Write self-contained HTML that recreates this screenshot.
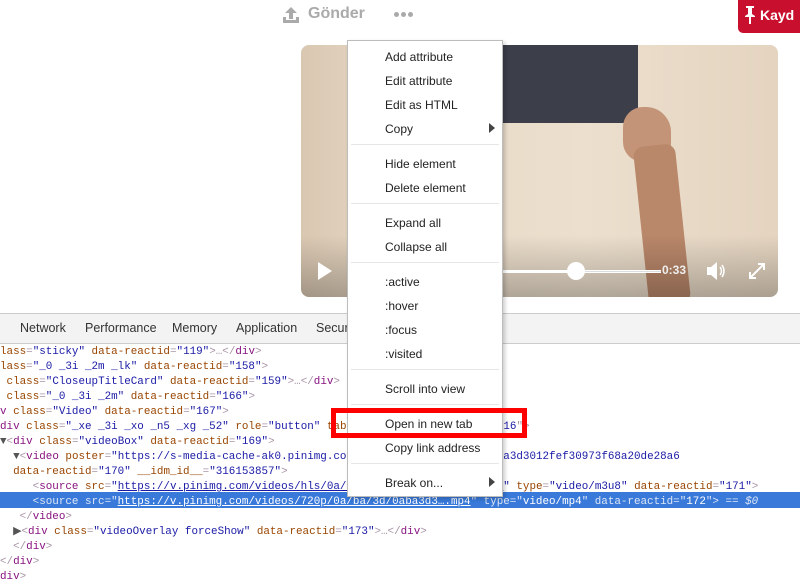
<!DOCTYPE html>
<html><head><meta charset="utf-8"><style>
*{margin:0;padding:0;box-sizing:border-box}
body{width:800px;height:576px;overflow:hidden;background:#fff;position:relative;font-family:"Liberation Sans",sans-serif}
.a{position:absolute}
.mi{position:absolute;left:37px;font-size:12px;color:#222;line-height:14px;white-space:nowrap}
.sep{position:absolute;left:3px;right:3px;height:1px;background:#e6e6e6}
.code{position:absolute;left:0;font-family:"Liberation Mono",monospace;font-size:10.9px;line-height:15px;white-space:pre;color:#a894a6}
.t{color:#881280}.n{color:#994500}.v{color:#1a1aa6}.u{color:#1a1aa6;text-decoration:underline}
.tab{position:absolute;top:321px;font-size:12.5px;color:#333}
</style></head><body>
<!-- top bar -->
<svg class="a" style="left:281px;top:5px" width="20" height="20" viewBox="0 0 20 20"><path d="M10 2 L4 8 H8 V14 H12 V8 H16 Z" fill="#aaa"/><path d="M2 12 V18 H18 V12 H15 V15 H5 V12 Z" fill="#aaa"/></svg>
<div class="a" style="left:308px;top:5px;font-size:16px;font-weight:bold;color:#aaa">Gönder</div>
<div class="a" style="left:394px;top:12px;width:5px;height:5px;border-radius:3px;background:#aaa"></div>
<div class="a" style="left:401px;top:12px;width:5px;height:5px;border-radius:3px;background:#aaa"></div>
<div class="a" style="left:408px;top:12px;width:5px;height:5px;border-radius:3px;background:#aaa"></div>
<div class="a" style="left:738px;top:0;width:70px;height:33px;background:#c8102e;border-radius:0 0 0 5px"></div>
<svg class="a" style="left:744px;top:5px" width="12" height="20" viewBox="0 0 12 20"><path d="M2 1H10V3H8V9L11 11V12H7V19H5V12H1V11L4 9V3H2Z" fill="#fff"/></svg>
<div class="a" style="left:760px;top:7px;font-size:14px;font-weight:bold;color:#fff">Kayd</div>
<!-- video -->
<div class="a" style="left:301px;top:45px;width:477px;height:252px;border-radius:8px;overflow:hidden;background:linear-gradient(90deg,#d9c7b1 0%,#e8d9c6 20%,#ecdfcd 60%,#e4d4c0 100%)">
 <div class="a" style="left:199px;top:0;width:138px;height:78px;background:#3c3e4a"></div>
 <div class="a" style="left:322px;top:62px;width:48px;height:55px;background:#c49478;border-radius:20px 25px 10px 20px"></div>
 <div class="a" style="left:340px;top:100px;width:42px;height:160px;background:#b9876a;transform:rotate(-6deg);border-radius:10px"></div>
 <div class="a" style="left:0;top:190px;width:477px;height:62px;background:linear-gradient(rgba(0,0,0,0),rgba(0,0,0,.25))"></div>
 <div class="a" style="left:190px;top:225px;width:170px;height:3px;background:#fff"></div>
 <div class="a" style="left:280px;top:226px;width:80px;height:1px;background:#ddd"></div>
 <div class="a" style="left:266px;top:217px;width:18px;height:18px;border-radius:9px;background:#fff"></div>
 <svg class="a" style="left:16px;top:217px" width="16" height="18"><path d="M1 0L15 9L1 18Z" fill="#fff"/></svg>
 <div class="a" style="left:361px;top:218px;font-size:12px;font-weight:bold;color:#eee">0:33</div>
 <svg class="a" style="left:405px;top:216px" width="22" height="20"><path d="M1 6H5L11 1V19L5 14H1Z" fill="#fff"/><path d="M14 6Q17 10 14 14M16 4Q20 10 16 16" stroke="#fff" fill="none" stroke-width="1.5"/></svg>
 <svg class="a" style="left:447px;top:217px" width="18" height="18"><path d="M2 16L16 2M10 2H16V8M2 10V16H8" stroke="#fff" fill="none" stroke-width="2"/></svg>
</div>
<!-- devtools -->
<div class="a" style="left:0;top:313px;width:800px;height:263px;background:#fff"></div>
<div class="a" style="left:0;top:313px;width:800px;height:1px;background:#ccc"></div>
<div class="a" style="left:0;top:314px;width:800px;height:30px;background:#f3f3f3;border-bottom:1px solid #ccc"></div>
<div class="tab" style="left:20px">Network</div>
<div class="tab" style="left:85px">Performance</div>
<div class="tab" style="left:172px">Memory</div>
<div class="tab" style="left:236px">Application</div>
<div class="tab" style="left:316px">Securi</div>
<div class="a" style="left:0;top:492px;width:800px;height:16px;background:#3879d9"></div>
<div class="code" style="top:345px"><span class="n">lass</span>=<span class="v">"sticky"</span> <span class="n">data-reactid</span>=<span class="v">"119"</span>&gt;…&lt;/<span class="t">div</span>&gt;
<span class="n">lass</span>=<span class="v">"_0 _3i _2m _lk"</span> <span class="n">data-reactid</span>=<span class="v">"158"</span>&gt;
 <span class="n">class</span>=<span class="v">"CloseupTitleCard"</span> <span class="n">data-reactid</span>=<span class="v">"159"</span>&gt;…&lt;/<span class="t">div</span>&gt;
 <span class="n">class</span>=<span class="v">"_0 _3i _2m"</span> <span class="n">data-reactid</span>=<span class="v">"166"</span>&gt;
<span class="t">v</span> <span class="n">class</span>=<span class="v">"Video"</span> <span class="n">data-reactid</span>=<span class="v">"167"</span>&gt;
<span class="t">div</span> <span class="n">class</span>=<span class="v">"_xe _3i _xo _n5 _xg _52"</span> <span class="n">role</span>=<span class="v">"button"</span> <span class="n">tabindex</span>=<span class="v">"0"</span> <span class="n">data-reactid</span>=<span class="v">"16</span>"&gt;
<span style="color:#555">▼</span>&lt;<span class="t">div</span> <span class="n">class</span>=<span class="v">"videoBox"</span> <span class="n">data-reactid</span>=<span class="v">"169"</span>&gt;
  <span style="color:#555">▼</span>&lt;<span class="t">video</span> <span class="n">poster</span>=<span class="v">"https://s-media-cache-ak0.pinimg.com/originals/0a/ba/3d/0aba3d3012fef30973f68a20de28a6</span>
  <span class="n">data-reactid</span>=<span class="v">"170"</span> <span class="n">__idm_id__</span>=<span class="v">"316153857"</span>&gt;
     &lt;<span class="t">source</span> <span class="n">src</span>=<span class="v">"</span><span class="u">https://v.pinimg.com/videos/hls/0a/ba/3d/0aba3d3012fef.m3u8</span><span class="v">"</span> <span class="n">type</span>=<span class="v">"video/m3u8"</span> <span class="n">data-reactid</span>=<span class="v">"171"</span>&gt;
<span style="color:#dde6f7">     &lt;source src="<u style="color:#fff">https://v.pinimg.com/videos/720p/0a/ba/3d/0aba3d3….mp4</u>" type="<span style="color:#fff">video/mp4</span>" data-reactid="<span style="color:#fff">172</span>"&gt; == <i>$0</i></span>
   &lt;/<span class="t">video</span>&gt;
  <span style="color:#555">▶</span>&lt;<span class="t">div</span> <span class="n">class</span>=<span class="v">"videoOverlay forceShow"</span> <span class="n">data-reactid</span>=<span class="v">"173"</span>&gt;…&lt;/<span class="t">div</span>&gt;
  &lt;/<span class="t">div</span>&gt;
&lt;/<span class="t">div</span>&gt;
<span class="t">div</span>&gt;</div>
<!-- context menu -->
<div class="a" style="left:347px;top:40px;width:156px;height:457px;background:#fff;border:1px solid #bdbdbd;box-shadow:2px 2px 4px rgba(0,0,0,.2)">
 <div class="mi" style="top:9px">Add attribute</div>
 <div class="mi" style="top:33px">Edit attribute</div>
 <div class="mi" style="top:57px">Edit as HTML</div>
 <div class="mi" style="top:81px">Copy</div>
 <svg class="a" style="left:141px;top:82px" width="6" height="10"><path d="M0 0L6 5L0 10Z" fill="#444"/></svg>
 <div class="sep" style="top:103px"></div>
 <div class="mi" style="top:116px">Hide element</div>
 <div class="mi" style="top:140px">Delete element</div>
 <div class="sep" style="top:162px"></div>
 <div class="mi" style="top:175px">Expand all</div>
 <div class="mi" style="top:199px">Collapse all</div>
 <div class="sep" style="top:221px"></div>
 <div class="mi" style="top:234px">:active</div>
 <div class="mi" style="top:258px">:hover</div>
 <div class="mi" style="top:282px">:focus</div>
 <div class="mi" style="top:306px">:visited</div>
 <div class="sep" style="top:328px"></div>
 <div class="mi" style="top:341px">Scroll into view</div>
 <div class="sep" style="top:363px"></div>
 <div class="mi" style="top:376px">Open in new tab</div>
 <div class="mi" style="top:400px">Copy link address</div>
 <div class="sep" style="top:422px"></div>
 <div class="mi" style="top:435px">Break on...</div>
 <svg class="a" style="left:141px;top:436px" width="6" height="10"><path d="M0 0L6 5L0 10Z" fill="#444"/></svg>
</div>
<div class="a" style="left:331px;top:408px;width:196px;height:30px;border:5px solid #f00"></div>
</body></html>
